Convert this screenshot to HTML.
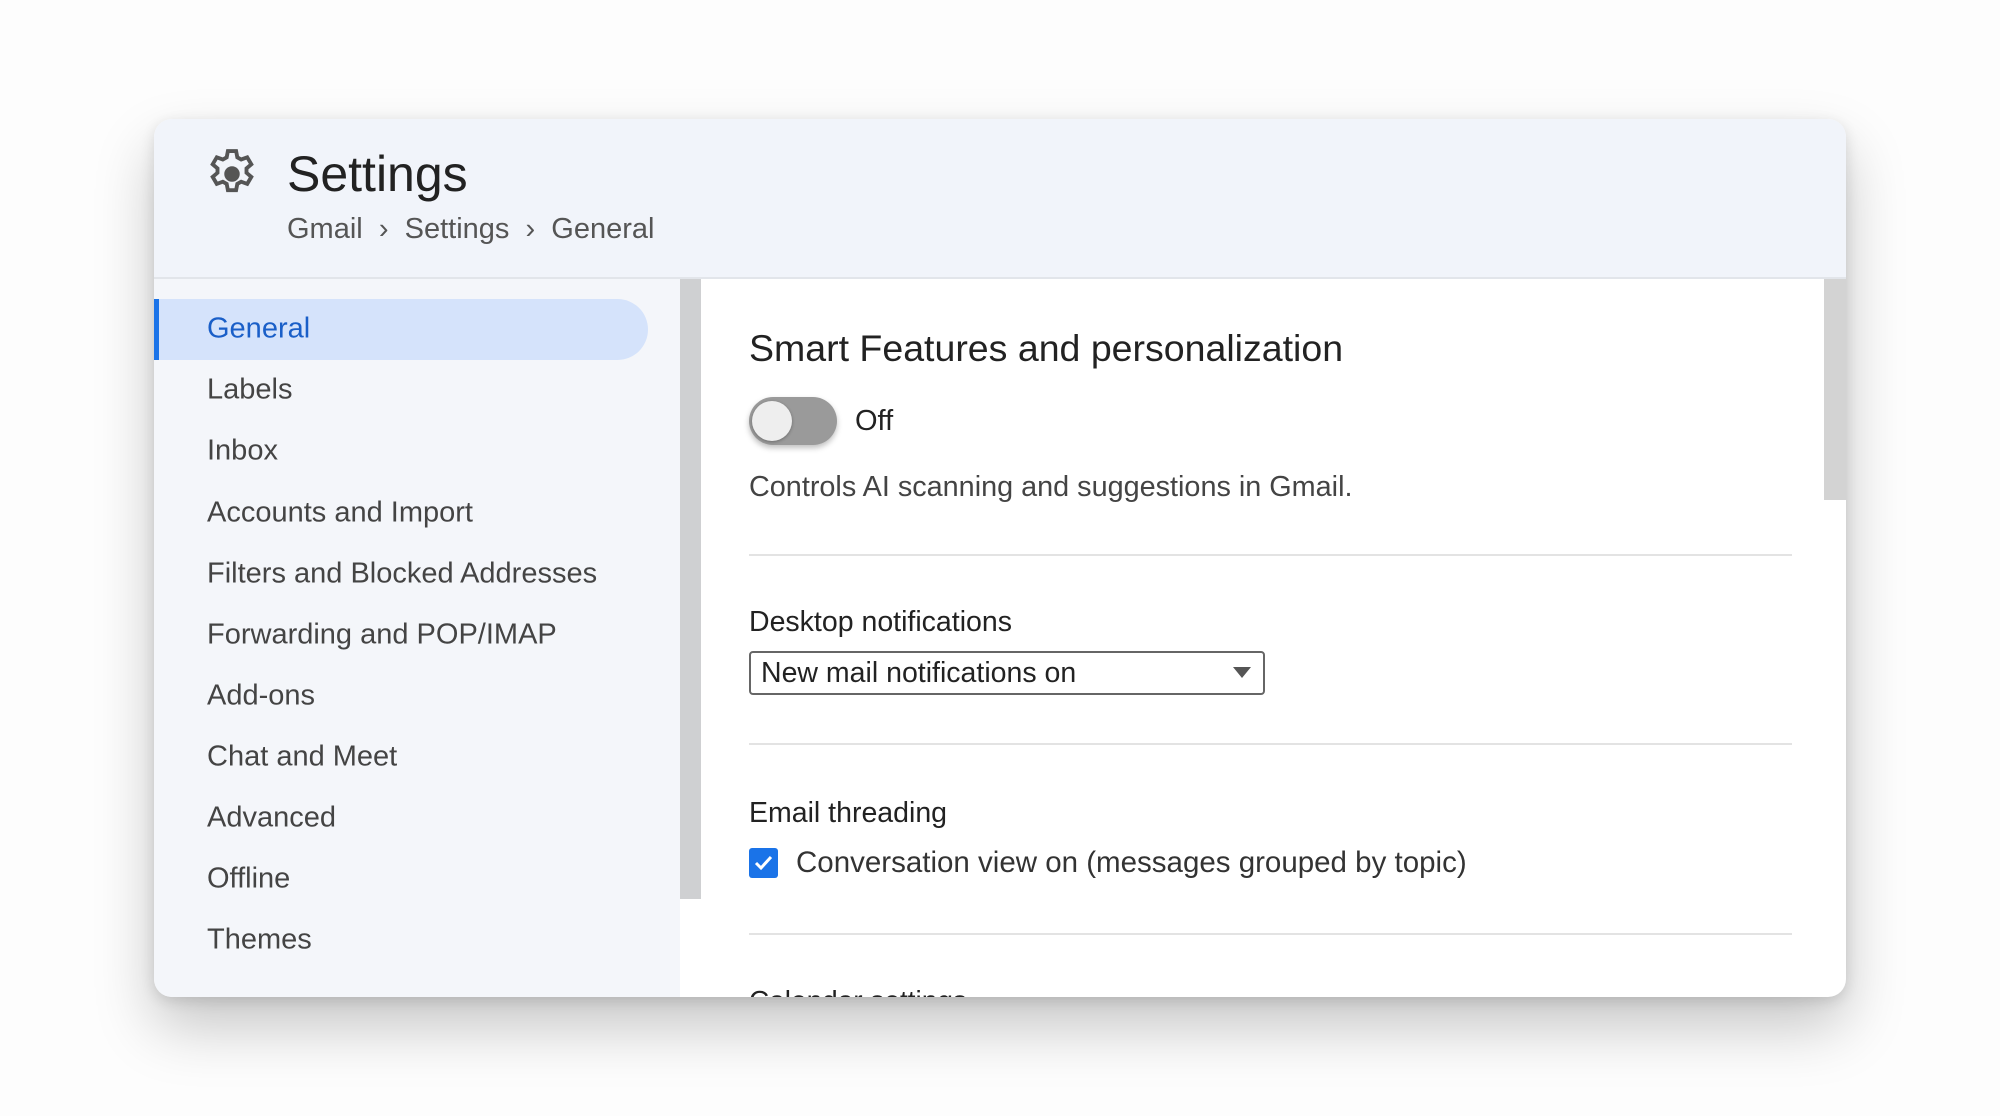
<!DOCTYPE html>
<html><head><meta charset="utf-8"><style>
*{margin:0;padding:0;box-sizing:border-box}
body{width:2000px;height:1116px;background:#fdfdfd;font-family:"Liberation Sans",sans-serif;position:relative;overflow:hidden}
.card{position:absolute;left:154px;top:119px;width:1692px;height:878px;border-radius:18px;overflow:hidden;background:#fff;box-shadow:0 30px 60px rgba(0,0,0,.22),0 4px 14px rgba(0,0,0,.12)}
.hdr{position:absolute;left:0;top:0;width:1692px;height:160px;background:#f1f4fa;border-bottom:2px solid #e2e5ea}
.side{position:absolute;left:0;top:160px;width:526px;height:718px;background:#f4f6fa}
.sbar{position:absolute;left:526px;top:160px;width:21px;height:620px;background:#cfd0d2}
.t{position:absolute;white-space:nowrap;color:#3c3c3c}
.nav{position:absolute;left:53px;font-size:29px;color:#444;transform:translateY(-50%)}
.pill{position:absolute;left:0;top:180px;width:494px;height:61px;background:#d5e3fb;border-radius:0 31px 31px 0}
.bar{position:absolute;left:0;top:180px;width:5px;height:61px;background:#1a73e8}
.div{position:absolute;left:749px;width:1043px;height:2px;background:#e3e3e3}
.rs{position:absolute;left:1824px;top:279px;width:22px;height:221px;background:#d3d3d3}
</style></head><body>
<div class="card">
<div class="hdr"></div>
<div class="side"></div>
<div class="sbar"></div>
<div class="pill"></div><div class="bar"></div>
</div>
<div class="rs"></div>
<svg style="position:absolute;left:203px;top:145px" width="58" height="58" viewBox="0 0 24 24"><path fill="none" stroke="#555" stroke-width="1.6" d="M10.3 2.5h3.4l.5 2.6 1.6.9 2.5-.9 1.7 2.9-2 1.7v1.8l2 1.7-1.7 2.9-2.5-.9-1.6.9-.5 2.6h-3.4l-.5-2.6-1.6-.9-2.5.9-1.7-2.9 2-1.7v-1.8l-2-1.7 1.7-2.9 2.5.9 1.6-.9z"/><circle cx="12" cy="12" r="3.2" fill="#555"/></svg>
<div class="t" style="left:287px;top:145px;font-size:50px;color:#222">Settings</div>
<div class="t" style="left:287px;top:213px;font-size:29px;color:#555">Gmail &nbsp;›&nbsp; Settings &nbsp;›&nbsp; General</div>
<div class="nav" style="top:329px;left:207px;color:#1a5fc8">General</div>
<div class="nav" style="top:390px;left:207px">Labels</div>
<div class="nav" style="top:451px;left:207px">Inbox</div>
<div class="nav" style="top:513px;left:207px">Accounts and Import</div>
<div class="nav" style="top:574px;left:207px">Filters and Blocked Addresses</div>
<div class="nav" style="top:635px;left:207px">Forwarding and POP/IMAP</div>
<div class="nav" style="top:696px;left:207px">Add-ons</div>
<div class="nav" style="top:757px;left:207px">Chat and Meet</div>
<div class="nav" style="top:818px;left:207px">Advanced</div>
<div class="nav" style="top:879px;left:207px">Offline</div>
<div class="nav" style="top:940px;left:207px">Themes</div>
<div class="t" style="left:749px;top:327px;font-size:37.5px;color:#222">Smart Features and personalization</div>
<div style="position:absolute;left:749px;top:397px;width:88px;height:48px;border-radius:24px;background:#9a9a9a;box-shadow:0 3px 6px rgba(0,0,0,.25)"></div>
<div style="position:absolute;left:752px;top:401px;width:40px;height:40px;border-radius:50%;background:#eee;box-shadow:0 1px 3px rgba(0,0,0,.3)"></div>
<div class="t" style="left:855px;top:405px;font-size:29px;color:#222">Off</div>
<div class="t" style="left:749px;top:471px;font-size:28.8px;color:#444">Controls AI scanning and suggestions in Gmail.</div>
<div class="div" style="top:554px"></div>
<div class="t" style="left:749px;top:606px;font-size:28.5px;color:#222">Desktop notifications</div>
<div style="position:absolute;left:749px;top:651px;width:516px;height:44px;border:2px solid #666;border-radius:4px;background:#fff"></div>
<div class="t" style="left:761px;top:657px;font-size:28.5px;color:#222">New mail notifications on</div>
<svg style="position:absolute;left:1233px;top:667px" width="18" height="12"><path d="M0 0h18L9 11z" fill="#555"/></svg>
<div class="div" style="top:743px"></div>
<div class="t" style="left:749px;top:797px;font-size:28.5px;color:#222">Email threading</div>
<svg style="position:absolute;left:749px;top:848px" width="29" height="30"><rect width="29" height="30" rx="3" fill="#1a73e8"/><path d="M7 15l5 5 10-11" stroke="#fff" stroke-width="3" fill="none"/></svg>
<div class="t" style="left:796px;top:846px;font-size:29.5px;color:#333">Conversation view on (messages grouped by topic)</div>
<div class="div" style="top:933px"></div>
<div style="position:absolute;left:749px;top:985px;height:12px;overflow:hidden"><div class="t" style="position:relative;left:0;top:0;font-size:28px;color:#222">Calendar settings</div></div>
</body></html>
